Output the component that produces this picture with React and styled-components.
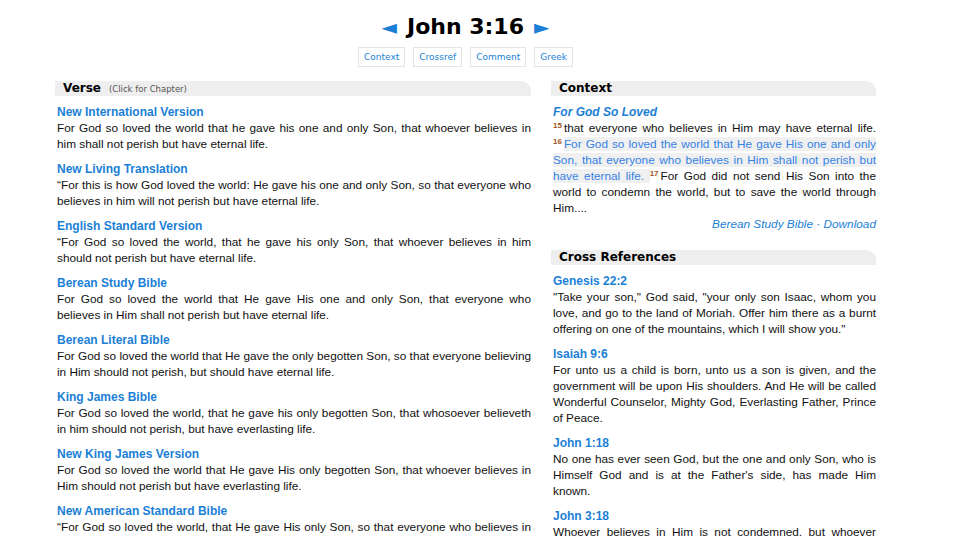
import styled, { createGlobalStyle } from 'styled-components';

const Global = createGlobalStyle`
  body {
    margin: 0;
    background: #fff;
    font-family: "Liberation Sans", Arial, sans-serif;
    color: #111;
  }
`;

const Page = styled.div`
  width: 821px;
  margin-left: 55px;
  padding-top: 12px;
`;

const Top = styled.div`
  display: flex;
  flex-direction: column;
  align-items: center;
`;

const Title = styled.h1`
  margin: 0;
  display: flex;
  align-items: center;
  gap: 10px;
  font-family: "DejaVu Sans", Verdana, sans-serif;
  font-size: 22px;
  font-weight: bold;
  line-height: 30px;
  color: #000;
`;

const Arrow = styled.span`
  color: #1c7fd6;
  font-family: "DejaVu Sans", sans-serif;
  font-size: 20px;
  line-height: 30px;
`;

const Tabs = styled.div`
  display: flex;
  gap: 8px;
  margin-top: 5px;
`;

const Tab = styled.a`
  border: 1px solid #e4e4e4;
  padding: 0 5px;
  height: 18px;
  line-height: 18px;
  font-family: "DejaVu Sans", Verdana, sans-serif;
  font-size: 9px;
  color: #1c7fd6;
  text-decoration: none;
`;

const Columns = styled.div`
  display: grid;
  grid-template-columns: 476px 325px;
  gap: 20px;
  margin-top: 14px;
`;

const Column = styled.div`
  display: flex;
  flex-direction: column;
`;

const Bar = styled.div`
  background: #eeeeee;
  border-top-right-radius: 10px;
  height: 15px;
  line-height: 15px;
  padding-left: 8px;
  margin-top: ${({ $gap }) => $gap || 0}px;
  margin-bottom: 8px;
  font-family: "DejaVu Sans", Verdana, sans-serif;
  font-size: 12px;
  font-weight: bold;
  color: #000;
  small {
    font-weight: normal;
    font-size: 8.5px;
    color: #555;
    margin-left: 8px;
  }
`;

const Block = styled.div`
  padding: 0 0 0 2px;
  margin-bottom: 9px;
`;

const Name = styled.a`
  display: block;
  font-size: 12px;
  font-weight: bold;
  line-height: 16px;
  color: #1c7fd6;
  text-decoration: none;
  font-style: ${({ $italic }) => ($italic ? 'italic' : 'normal')};
`;

const Text = styled.p`
  margin: 0;
  font-size: 11.8px;
  line-height: 16px;
  text-align: justify;
`;

const Num = styled.sup`
  font-size: 8px;
  font-weight: bold;
  color: #a0521c;
  vertical-align: top;
  line-height: 12px;
  margin-right: 2px;
`;

const Hi = styled.span`
  background: #f0f0f0;
  color: #3482e6;
`;

const Source = styled.div`
  text-align: right;
  font-size: 11.8px;
  font-style: italic;
  line-height: 16px;
  color: #1c7fd6;
`;

const versions = [
  ['New International Version', 'For God so loved the world that he gave his one and only Son, that whoever believes in him shall not perish but have eternal life.'],
  ['New Living Translation', '\u201CFor this is how God loved the world: He gave his one and only Son, so that everyone who believes in him will not perish but have eternal life.'],
  ['English Standard Version', '\u201CFor God so loved the world, that he gave his only Son, that whoever believes in him should not perish but have eternal life.'],
  ['Berean Study Bible', 'For God so loved the world that He gave His one and only Son, that everyone who believes in Him shall not perish but have eternal life.'],
  ['Berean Literal Bible', 'For God so loved the world that He gave the only begotten Son, so that everyone believing in Him should not perish, but should have eternal life.'],
  ['King James Bible', 'For God so loved the world, that he gave his only begotten Son, that whosoever believeth in him should not perish, but have everlasting life.'],
  ['New King James Version', 'For God so loved the world that He gave His only begotten Son, that whoever believes in Him should not perish but have everlasting life.'],
  ['New American Standard Bible', '\u201CFor God so loved the world, that He gave His only Son, so that everyone who believes in Him will not perish, but have eternal life.'],
];

const refs = [
  ['Genesis 22:2', '"Take your son," God said, "your only son Isaac, whom you love, and go to the land of Moriah. Offer him there as a burnt offering on one of the mountains, which I will show you."'],
  ['Isaiah 9:6', 'For unto us a child is born, unto us a son is given, and the government will be upon His shoulders. And He will be called Wonderful Counselor, Mighty God, Everlasting Father, Prince of Peace.'],
  ['John 1:18', "No one has ever seen God, but the one and only Son, who is Himself God and is at the Father's side, has made Him known."],
  ['John 3:18', 'Whoever believes in Him is not condemned, but whoever does not believe has already been condemned, because he has not believed in the name of the one and only Son of God.'],
];

export default function App() {
  return (
    <>
      <Global />
      <Page>
        <Top>
          <Title>
            <Arrow>◄</Arrow>
            John 3:16
            <Arrow>►</Arrow>
          </Title>
          <Tabs>
            <Tab>Context</Tab>
            <Tab>Crossref</Tab>
            <Tab>Comment</Tab>
            <Tab>Greek</Tab>
          </Tabs>
        </Top>
        <Columns>
          <Column>
            <Bar>
              Verse<small>(Click for Chapter)</small>
            </Bar>
            {versions.map(([name, text]) => (
              <Block key={name}>
                <Name>{name}</Name>
                <Text>{text}</Text>
              </Block>
            ))}
          </Column>
          <Column>
            <Bar>Context</Bar>
            <Block>
              <Name $italic>For God So Loved</Name>
              <Text>
                <Num>15</Num>that everyone who believes in Him may have eternal life.{' '}
                <Num>16</Num>
                <Hi>For God so loved the world that He gave His one and only Son, that everyone who believes in Him shall not perish but have eternal life. </Hi>{' '}
                <Num>17</Num>For God did not send His Son into the world to condemn the world, but to save the world through Him....
              </Text>
              <Source>Berean Study Bible · Download</Source>
            </Block>
            <Bar $gap={9}>Cross References</Bar>
            {refs.map(([name, text]) => (
              <Block key={name}>
                <Name>{name}</Name>
                <Text>{text}</Text>
              </Block>
            ))}
          </Column>
        </Columns>
      </Page>
    </>
  );
}
